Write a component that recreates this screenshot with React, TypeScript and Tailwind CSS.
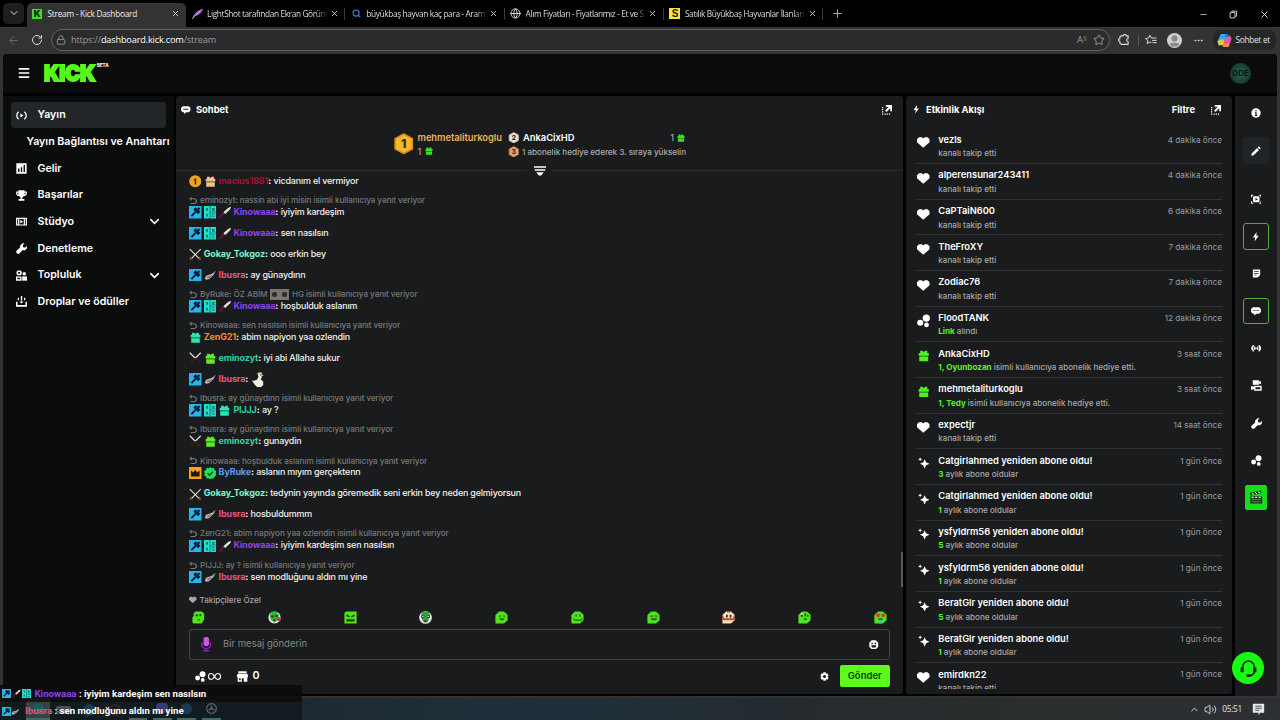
import type { ReactNode } from 'react';
import {
  ChevronDown,
  ChevronUp,
  Globe,
  Lock,
  Menu,
  Minus,
  MoreHorizontal,
  Plus,
  RotateCw,
  Search,
  Star,
  Volume2,
  X,
  ArrowLeft,
} from 'lucide-react';

interface IconProps {
  size?: number;
  className?: string;
}

function Glyph({ size = 12, className = '', children }: IconProps & { children: ReactNode }) {
  return (
    <svg
      width={size}
      height={size}
      viewBox="0 0 16 16"
      fill="currentColor"
      className={`flex-none ${className}`}
    >
      {children}
    </svg>
  );
}

/* ---------- Icons ---------- */

const HeartIcon = (p: IconProps) => (
  <Glyph {...p}>
    <path d="M2.5 1.5h3.7L8 3.2l1.8-1.7h3.7L16 4v4l-8 7-8-7V4z" />
  </Glyph>
);

const GiftIcon = (p: IconProps) => (
  <Glyph {...p}>
    <path d="M3 1h3.4L8 3l1.6-2H13v3h2v4H1V4h2zM1.8 9h12.4v6.500H1.800z" />
    <path d="M1.800 8h12.400v1H1.800z" opacity=".45" />
  </Glyph>
);

const LinksIcon = (p: IconProps) => (
  <Glyph {...p}>
    <circle cx="11" cy="4.8" r="4.3" />
    <circle cx="3.8" cy="10.3" r="3.6" />
    <circle cx="11.3" cy="13" r="2.8" />
  </Glyph>
);

const SparkleIcon = (p: IconProps) => (
  <Glyph {...p}>
    <path d="M9.2 3l2 4.4L16 9.5l-4.8 2-2 4.5-2-4.5-4.4-2 4.4-2.1zM3 .5l.8 1.9 2 .9-2 .8L3 6l-.9-1.9-1.9-.8 1.9-.9z" />
  </Glyph>
);

const BoltIcon = (p: IconProps) => (
  <Glyph {...p}>
    <path d="M9.5 0L3 9.3h4L6 16l7-9.6H9z" />
  </Glyph>
);

const ChatIcon = ({ dots = false, ...p }: IconProps & { dots?: boolean }) => (
  <Glyph {...p}>
    <path d="M3 2h10l2.8 2.7v4.8L13 12.2H8.8L5.2 15v-2.8H3L.2 9.5V4.7z" />
    {dots ? (
      <path d="M4 6.3h1.7V8H4zM7.2 6.3h1.7V8H7.2zM10.4 6.3h1.7V8h-1.7z" fill="#191b1c" />
    ) : (
      <path d="M3.8 6.4h8.4v1.5H3.8z" fill="#191b1c" />
    )}
  </Glyph>
);

const PopoutIcon = (p: IconProps) => (
  <Glyph {...p}>
    <path d="M6 0h10v10h-2.800V5L7.200 11 5 8.800l5.800-5.900H6z" />
    <path d="M0 3h2v2H0zM0 6.500h2v2H0zM0 10h2v2H0zM0 13.500h2v2H0zM4 13.500h2v2H4zM7.500 13.500h2v2h-2zM11 13.500h2v2h-2z" />
  </Glyph>
);

const BroadcastIcon = (p: IconProps) => (
  <Glyph {...p}>
    <path
      d="M3.800 2.500C.3 5.300.3 10.700 3.800 13.500M12.200 2.500c3.500 2.800 3.500 8.200 0 11"
      fill="none"
      stroke="currentColor"
      strokeWidth="1.900"
    />
    <path d="M6.300 5.200L10.800 8l-4.500 2.800z" />
  </Glyph>
);

const ChartIcon = (p: IconProps) => (
  <Glyph {...p}>
    <path d="M.5.5h15v15H.5z" />
    <path d="M3 8h2v5H3zM7 6h2v7H7zM11 3h2v10h-2z" fill="#0b0c0c" />
  </Glyph>
);

const TrophyIcon = (p: IconProps) => (
  <Glyph {...p}>
    <path
      fillRule="evenodd"
      d="M3.500.5h9v1.700h3.300v4l-2.300 2.600h-2L9.300 10.800v2.200h2.900v2.500H3.800V13h2.900v-2.200L4.500 8.800h-2L.2 6.200v-4h3.300zM2 4v1.800l1.500 1V4zm10.500 0v2.800l1.500-1V4z"
    />
  </Glyph>
);

const StudioIcon = (p: IconProps) => (
  <Glyph {...p}>
    <path fillRule="evenodd" d="M0 2.500h16v11.300H0zM1.800 4.200v8H3v-8zm11.200 0v8h1.200v-8zM4.800 4.200v8h6.400v-8z" />
    <path d="M6.200 5.500l4 2.700-4 2.700z" />
  </Glyph>
);

const WrenchIcon = (p: IconProps) => (
  <Glyph {...p}>
    <path d="M9.500.5h3L10.200 3v2.600l1 .9h2.300L15.800 4v4l-2.600 2.600H9.500L4.500 15.500H2l-1.600-1.700v-2.200L6 6.600V3.800z" />
  </Glyph>
);

const CommunityIcon = (p: IconProps) => (
  <Glyph {...p}>
    <path fillRule="evenodd" d="M2.500.8h4l1.800 1.800v3.200L6.500 7.600h-4L.8 5.800V2.600zm.9 2L2.800 4.200l.6 1.300h2.200l.6-1.300-.6-1.400z" />
    <circle cx="12" cy="5.500" r="2.600" />
    <path fillRule="evenodd" d="M0 9.300h8v6.200H0zm2 2v2.200h4v-2.200z" />
    <path d="M9 9.300h7v6.200H9z" />
  </Glyph>
);

const DropsIcon = (p: IconProps) => (
  <Glyph {...p}>
    <path d="M7 0h2v6H7zM2.500 2.500h1.800V6H2.500zM11.700 2.500h1.800V6h-1.800zM0 8.500h2.200V13h11.600V8.500H16v7H0zM7 7h2v1.500h2L8 11 5 8.500h2z" />
  </Glyph>
);

const InfoIcon = (p: IconProps) => (
  <Glyph {...p}>
    <circle cx="8" cy="8" r="7.500" />
    <path d="M7 3.500h2v2H7zM6.200 6.800H9v4.500h1v1.500H6.200v-1.500h.9v-3h-.9z" fill="#191b1c" />
  </Glyph>
);

const PencilIcon = (p: IconProps) => (
  <Glyph {...p}>
    <path d="M12.500.5l3 3-1.800 1.800-3-3zM9.800 3.300l3 3-8.600 8.600-3.700.6.600-3.600z" />
  </Glyph>
);

const ScenesIcon = (p: IconProps) => (
  <Glyph {...p}>
    <path fillRule="evenodd" d="M4.300 3.500h7.400l1.300 1.300v6.400l-1.300 1.300H4.300L3 11.200V4.800zm2.500 2.300v4.400L10.300 8z" />
    <path d="M0 1h3.500v1.500h-2V5H0zM16 1h-3.500v1.500h2V5H16zM0 15h3.500v-1.500h-2V11H0zM16 15h-3.500v-1.500h2V11H16z" />
  </Glyph>
);

const NoteIcon = (p: IconProps) => (
  <Glyph {...p}>
    <path d="M1.500 1h13v9.500l-4.500 4.700H1.500z" />
    <path d="M4 4h8v1.300H4zM4 7h8v1.300H4zM4 10h4v1.300H4z" fill="#191b1c" />
  </Glyph>
);

const SignalIcon = (p: IconProps) => (
  <Glyph {...p}>
    <path d="M3 3h1.700L3.300 8l1.400 5H3L.5 9.500v-3zM13 3h-1.700L12.700 8l-1.400 5H13l2.500-3.500v-3zM4.800 5.500h1.800v1.700h2.800V5.500h1.800v5H9.400V8.800H6.600v1.700H4.800z" />
  </Glyph>
);

const MultiCamIcon = (p: IconProps) => (
  <Glyph {...p}>
    <path d="M2.500 .5h9v2l3-1.200v4.900l-3-1.200v2h-9z" />
    <path fillRule="evenodd" d="M0 9h2.500L4.500 10V8.500h11V15.500h-11v-2.500L0 14.500zm6.500 1.500v3h7v-3z" />
  </Glyph>
);

const ShopIcon = (p: IconProps) => (
  <Glyph {...p}>
    <path fillRule="evenodd" d="M2 .5h12v2.300H2zM1.500 3.700h13L16 6v3h-1v6.500H9.800v-5H7v5H1V9H0V6zM3 10.500v3h2.300v-3z" />
  </Glyph>
);

const SmileIcon = (p: IconProps) => (
  <Glyph {...p}>
    <path d="M4.500.5h7l4 4v7l-4 4h-7l-4-4v-7z" />
    <path d="M4 4.500h2.500V7H4zM9.500 4.500H12V7H9.500zM3.500 9h9l-1.500 3.500H5z" fill="#191b1c" />
  </Glyph>
);

const GearIcon = (p: IconProps) => (
  <Glyph {...p}>
    <path fillRule="evenodd" d="M6 .5h4l.5 2.500 2.500-.8L15.300 6l-2 2 2 2-2.300 3.800-2.500-.8-.5 2.500H6L5.500 13l-2.500.8L.7 10l2-2-2-2L3 2.200l2.500.8zM8 5.300a2.700 2.700 0 100 5.400 2.700 2.700 0 000-5.400z" />
  </Glyph>
);

const ReplyIcon = (p: IconProps) => (
  <Glyph {...p}>
    <path d="M5 1v3.300h6l4 3.400v4L11.500 15H3v-2h7.500l2.300-2V8.500l-2.600-2.200H5v3.200L.5 5.300z" />
  </Glyph>
);

const ExtensionIcon = (p: IconProps) => (
  <Glyph {...p}>
    <path
      d="M4 2.500h3a2 2 0 014 0h2.500V6a2 2 0 000 4v3.800H4.500L2.500 12V9.800a1.800 1.800 0 010-3.600V4z"
      fill="none"
      stroke="currentColor"
      strokeWidth="1.500"
      strokeLinejoin="round"
    />
  </Glyph>
);

/* ---------- Chat badges ---------- */

type Badge = 'mod' | 'og' | 'knife' | 'sword' | 'swordRed' | 'blade' | 'gold' | 'host' | 'verified' | 'giftTan' | 'giftTeal' | 'giftGreen';

function BadgeIcon({ kind }: { kind: Badge }) {
  switch (kind) {
    case 'mod':
      return (
        <Glyph size={12.500}>
          <path d="M0 0h16v16H0z" fill="#26b5ee" />
          <path d="M5.500 4.500L8.500 1.500l6 6-3 3z" fill="#0b1c26" />
          <path d="M11.500 2.500l2 2M8.500 7.500l-5.500 5.500" stroke="#0b1c26" strokeWidth="2.600" />
        </Glyph>
      );
    case 'og':
      return (
        <Glyph size={12.500}>
          <path d="M0 0h16v16H0z" fill="#1fe0cb" />
          <path d="M3 2.500h2v3.500H3zM10.500 2.500H14v1h-2v1.200h2V6h-3.500zM3 10h2v3.500H3zM9.500 9.500h4.500v.900H9.500zM9.500 12.500h4.500v.900H9.500z" fill="#0b6664" />
          <path d="M7.300 0h.8v16h-.8zM8 7.500h8v.6H8z" fill="#134d50" />
        </Glyph>
      );
    case 'knife':
      return (
        <Glyph size={12.500}>
          <path d="M0 16l.5-3 4.500-5 2 1.800L3 15z" fill="#64103f" />
          <path d="M5.500 8L12 2.200 15.500.8 14.300 4 8 10.200z" fill="#e4dfdc" />
        </Glyph>
      );
    case 'sword':
      return (
        <Glyph size={12.500}>
          <path d="M1 1.500l12 12M15 1.500l-12 12" stroke="#ddd9cf" strokeWidth="1.500" />
          <path d="M1.500 11.500l3 3M14.500 11.500l-3 3M3.500 12.500L1 15M12.500 12.500L15 15" stroke="#8b6720" strokeWidth="1.500" />
        </Glyph>
      );
    case 'swordRed':
      return (
        <Glyph size={12.500}>
          <path d="M1 1l7 7 7-7" fill="none" stroke="#d8d8d8" strokeWidth="1.700" />
          <path d="M8 8l-6 6M8 8l6 6M1.500 11L5 14.500M14.500 11L11 14.500" stroke="#4a1822" strokeWidth="1.400" />
        </Glyph>
      );
    case 'blade':
      return (
        <Glyph size={12.500}>
          <path d="M1 12.500L2.500 8.500 10 6l5-3.500-2.500 5-6 5.500-4 .8z" fill="#bab3b3" />
          <path d="M3 10l8-2.500-4.500 5z" fill="#8c7b7f" />
          <path d="M10 6l5-3.500-2 3z" fill="#777" />
        </Glyph>
      );
    case 'gold':
      return (
        <Glyph size={12.500}>
          <circle cx="8" cy="8" r="7.700" fill="#eda51d" />
          <path d="M6 5.500L8 4h1.300v8H7.300V6.500L6 7.200z" fill="#54320b" />
        </Glyph>
      );
    case 'host':
      return (
        <Glyph size={12.500}>
          <path d="M0 0h16v16H0z" fill="#f5a51c" />
          <path d="M2.500 4.500l3 2.500L8 3.500 10.500 7l3-2.500V12h-11z" fill="#231a09" />
        </Glyph>
      );
    case 'verified':
      return (
        <Glyph size={12.500}>
          <path d="M8 0l2 1.500 2.700-.3.700 2.600 2.400 1.300L15 8l.8 2.800-2.400 1.300-.7 2.700-2.700-.4L8 16l-2-1.600-2.700.4-.7-2.700-2.400-1.300L1 8 .2 5.100l2.400-1.300.7-2.600 2.700.3z" fill="#1fe35c" />
          <path d="M4.500 8l2.500 2.500L11.500 6" fill="none" stroke="#0c4a20" strokeWidth="2" />
        </Glyph>
      );
    case 'giftTan':
      return <GiftIcon size={11} className="text-[#efc283]" />;
    case 'giftTeal':
      return <GiftIcon size={11} className="text-[#2be6b4]" />;
    case 'giftGreen':
      return <GiftIcon size={11} className="text-[#5fea2a]" />;
  }
}

/* ---------- Data ---------- */

interface Message {
  user: string;
  color: string;
  badges: Badge[];
  text?: string;
  reply?: string;
  kind?: 'duck' | 'emoteReply';
}

const PURPLE = 'text-[#8b42e8]';
const MINT = 'text-[#7ff5c9]';
const PINK = 'text-[#e2557f]';
const TEAL = 'text-[#2fd3a5]';

const MESSAGES: Message[] = [
  { user: 'macius1881', color: 'text-[#ae0d35]', badges: ['gold', 'giftTan'], text: 'vicdanım el vermiyor' },
  { user: 'Kinowaaa', color: PURPLE, badges: ['mod', 'og', 'knife'], text: 'iyiyim kardeşim', reply: 'eminozyt: nassin abi iyi misin' },
  { user: 'Kinowaaa', color: PURPLE, badges: ['mod', 'og', 'knife'], text: 'sen nasılsın' },
  { user: 'Gokay_Tokgoz', color: MINT, badges: ['sword'], text: 'ooo erkin bey' },
  { user: 'Ibusra', color: PINK, badges: ['mod', 'blade'], text: 'ay günaydınn' },
  { user: 'Kinowaaa', color: PURPLE, badges: ['mod', 'og', 'knife'], text: 'hoşbulduk aslanım', reply: 'ByRuke: ÖZ ABİM', kind: 'emoteReply' },
  { user: 'ZenG21', color: 'text-[#f58a23]', badges: ['giftTeal'], text: 'abim napiyon yaa ozlendin', reply: 'Kinowaaa: sen nasılsın' },
  { user: 'eminozyt', color: TEAL, badges: ['swordRed', 'giftGreen'], text: 'iyi abi Allaha sukur' },
  { user: 'Ibusra', color: PINK, badges: ['mod', 'blade'], kind: 'duck' },
  { user: 'PIJJJ', color: TEAL, badges: ['mod', 'og', 'giftTeal'], text: 'ay ?', reply: 'Ibusra: ay günaydınn' },
  { user: 'eminozyt', color: TEAL, badges: ['swordRed', 'giftGreen'], text: 'gunaydin', reply: 'Ibusra: ay günaydınn' },
  { user: 'ByRuke', color: 'text-[#5f9df0]', badges: ['host', 'verified'], text: 'aslanın mıyım gerçektenn', reply: 'Kinowaaa: hoşbulduk aslanım' },
  { user: 'Gokay_Tokgoz', color: MINT, badges: ['sword'], text: 'tedynin yayında göremedik seni erkin bey neden gelmiyorsun' },
  { user: 'Ibusra', color: PINK, badges: ['mod', 'blade'], text: 'hosbuldummm' },
  { user: 'Kinowaaa', color: PURPLE, badges: ['mod', 'og', 'knife'], text: 'iyiyim kardeşim sen nasılsın', reply: 'ZenG21: abim napiyon yaa ozlendin' },
  { user: 'Ibusra', color: PINK, badges: ['mod', 'blade'], text: 'sen modluğunu aldın mı yine', reply: 'PIJJJ: ay ?' },
];

interface Activity {
  icon: 'heart' | 'links' | 'gift' | 'sparkle';
  title: string;
  accent?: string;
  text: string;
  time: string;
}

const ACTIVITIES: Activity[] = [
  { icon: 'heart', title: 'vezls', text: 'kanalı takip etti', time: '4 dakika önce' },
  { icon: 'heart', title: 'alperensunar243411', text: 'kanalı takip etti', time: '4 dakika önce' },
  { icon: 'heart', title: 'CaPTaiN600', text: 'kanalı takip etti', time: '6 dakika önce' },
  { icon: 'heart', title: 'TheFroXY', text: 'kanalı takip etti', time: '7 dakika önce' },
  { icon: 'heart', title: 'Zodiac76', text: 'kanalı takip etti', time: '7 dakika önce' },
  { icon: 'links', title: 'FloodTANK', accent: 'Link', text: 'alındı', time: '12 dakika önce' },
  { icon: 'gift', title: 'AnkaCixHD', accent: '1, Oyunbozan', text: 'isimli kullanıcıya abonelik hediye etti.', time: '3 saat önce' },
  { icon: 'gift', title: 'mehmetaliturkoglu', accent: '1, Tedy', text: 'isimli kullanıcıya abonelik hediye etti.', time: '3 saat önce' },
  { icon: 'heart', title: 'expectjr', text: 'kanalı takip etti', time: '14 saat önce' },
  { icon: 'sparkle', title: 'Catgirlahmed yeniden abone oldu!', accent: '3', text: 'aylık abone oldular', time: '1 gün önce' },
  { icon: 'sparkle', title: 'Catgirlahmed yeniden abone oldu!', accent: '1', text: 'aylık abone oldular', time: '1 gün önce' },
  { icon: 'sparkle', title: 'ysfyldrm56 yeniden abone oldu!', accent: '5', text: 'aylık abone oldular', time: '1 gün önce' },
  { icon: 'sparkle', title: 'ysfyldrm56 yeniden abone oldu!', accent: '1', text: 'aylık abone oldular', time: '1 gün önce' },
  { icon: 'sparkle', title: 'BeratGlr yeniden abone oldu!', accent: '5', text: 'aylık abone oldular', time: '1 gün önce' },
  { icon: 'sparkle', title: 'BeratGlr yeniden abone oldu!', accent: '1', text: 'aylık abone oldular', time: '1 gün önce' },
  { icon: 'heart', title: 'emirdkn22', text: 'kanalı takip etti', time: '1 gün önce' },
];

const NAV = [
  { label: 'Gelir', icon: <ChartIcon size={11} /> },
  { label: 'Başarılar', icon: <TrophyIcon size={11} /> },
  { label: 'Stüdyo', icon: <StudioIcon size={11} />, expandable: true },
  { label: 'Denetleme', icon: <WrenchIcon size={11} /> },
  { label: 'Topluluk', icon: <CommunityIcon size={11} />, expandable: true },
  { label: 'Droplar ve ödüller', icon: <DropsIcon size={11} /> },
];

/* ---------- Browser chrome ---------- */

function KickMark() {
  return (
    <span className="grid h-[10px] w-[10px] flex-none place-items-center bg-[#35e61d] font-[Inter] text-[9px] font-black leading-none text-[#08230a]">
      K
    </span>
  );
}

const TABS = [
  {
    title: 'LightShot tarafından Ekran Görünt',
    icon: (
      <Glyph size={11}>
        <path d="M0 16C3 8 8 3 16 1c-1 5-5 9-12 11z" fill="#a35fd0" />
        <path d="M0 16L12 4" stroke="#e5c3f5" strokeWidth="1" />
      </Glyph>
    ),
  },
  { title: 'büyükbaş hayvan kaç para - Aram', icon: <Search size={9} strokeWidth={3} className="mx-px flex-none text-[#2f7fd6]" /> },
  { title: 'Alım Fiyatları - Fiyatlarımız - Et ve S', icon: <Globe size={11} className="flex-none text-[#e0e0e0]" /> },
  {
    title: 'Satılık Büyükbaş Hayvanlar İlanları',
    icon: (
      <span className="grid h-[11px] w-[11px] flex-none place-items-center bg-[#f6e92e] font-['Liberation_Sans'] text-[10px] font-bold leading-none text-[#222]">
        S
      </span>
    ),
  },
];

function TabBar() {
  return (
    <div className="flex h-[26.500px] flex-none items-end bg-black font-['Open_Sans','Noto_Sans',sans-serif] text-[8.300px] font-medium tracking-[-0.250px] text-[#dedede]">
      <div className="mb-[3px] ml-[3px] grid h-[21px] w-[21px] flex-none place-items-center rounded-[5px] bg-[#1e1e1e]">
        <ChevronDown size={12} strokeWidth={2} />
      </div>
      <div className="ml-[3px] flex h-[23.500px] w-[159px] flex-none items-center rounded-t-[5px] bg-[#333] pl-[5px] pr-[6px] pb-[2px]">
        <KickMark />
        <span className="ml-[5.500px] flex-1 whitespace-nowrap text-[#eee]">Stream - Kick Dashboard</span>
        <X size={9} strokeWidth={2.200} />
      </div>
      {TABS.map((tab) => (
        <div key={tab.title} className="flex h-[23.500px] w-[159.300px] flex-none items-center pb-[2px] pl-[5.500px]">
          {tab.icon}
          <span className="ml-[4.500px] w-[122px] whitespace-nowrap tracking-[-0.370px] [mask-image:linear-gradient(to_right,black_90%,transparent)]">
            {tab.title}
          </span>
          <X size={9} strokeWidth={2.200} className="ml-[1.500px] flex-none" />
          <span className="ml-[5.500px] h-3 w-px bg-[#3b3b3b]" />
        </div>
      ))}
      <Plus size={13} strokeWidth={1.600} className="mb-[6.500px] ml-[8px] flex-none text-[#b8b8b8]" />
      <div className="mb-[7px] ml-auto mr-[10px] flex items-center gap-[21px]">
        <Minus size={9} />
        <Glyph size={9} className="text-[#cfcfcf]">
          <path fill="none" stroke="currentColor" strokeWidth="1.700" d="M2 4.500h8.500V14H2zM5 4V2h8.500v9H11" />
        </Glyph>
        <X size={11} strokeWidth={2} />
      </div>
    </div>
  );
}

function Toolbar() {
  return (
    <div className="flex h-[27px] flex-none items-center bg-[#333] font-['Open_Sans','Noto_Sans',sans-serif] text-[#dcdcdc]">
      <ArrowLeft size={13} strokeWidth={1.800} className="ml-[7px] flex-none text-[#6c6c6c]" />
      <RotateCw size={12} strokeWidth={2} className="ml-[11px] flex-none" />
      <div className="ml-[7.500px] flex h-[22px] w-[1059.500px] flex-none items-center rounded-full border border-[#606060] bg-[#2b2b2b] pl-[4.500px] pr-[4px]">
        <Lock size={10} className="flex-none text-[#9a9a9a]" />
        <span className="ml-[5px] flex-1 text-[9.200px] tracking-[-0.180px] text-[#9c9c9c]">
          https://<span className="text-white">dashboard.kick.com</span>/stream
        </span>
        <span className="text-[9.500px] text-[#9a9a9a]">A<sup className="text-[6px]">))</sup></span>
        <Star size={12} strokeWidth={1.800} className="ml-[6.500px] flex-none text-[#a8a8a8]" />
      </div>
      <ExtensionIcon size={12} className="ml-[8px]" />
      <span className="ml-[7.500px] h-[11px] w-px bg-[#565656]" />
      <Glyph size={12} className="ml-[6.500px]">
        <path fill="none" stroke="currentColor" strokeWidth="1.300" d="M8.500 11.500L6.500 10.600 3 13l.7-4.200L.8 6l4-.6L6.600 1.600l1.900 3.800h6.800M9.500 8.500h6M10 11.500h5.500" />
      </Glyph>
      <span className="ml-[9.500px] grid h-[15px] w-[15px] flex-none place-items-center overflow-hidden rounded-full bg-[#cfcfcf] text-[#8b8b8b]">
        <Glyph size={15}>
          <circle cx="8" cy="5.800" r="3.300" />
          <path d="M2.500 12c1-2.200 10-2.200 11 0L11 14.500H5z" />
        </Glyph>
      </span>
      <MoreHorizontal size={11} className="ml-[11.500px] flex-none" />
      <div className="ml-[9px] flex h-[20px] w-[63px] flex-none items-center gap-[4px] rounded-[8px] bg-[#262626] pl-[3.500px]">
        <Glyph size={15}>
          <path d="M4 1h6L7.500 13H1.500L.5 9z" fill="#2aa7e8" />
          <path d="M.5 9L3 7h5l-1 6H2z" fill="#e8c53b" />
          <path d="M9 3h5l1.500 3-3 9h-6z" fill="#e558a4" />
          <path d="M9.500 1H12l1 3H9z" fill="#2f5fd8" />
          <path d="M8 11h5.500l-1.500 4H6z" fill="#f18a55" />
        </Glyph>
        <span className="whitespace-nowrap text-[8.300px] font-medium tracking-[-0.300px] text-[#e4e4e4]">Sohbet et</span>
      </div>
    </div>
  );
}

/* ---------- Dashboard ---------- */

function Sidebar() {
  return (
    <aside className="w-[171px] flex-none bg-[#0b0c0c] pl-[8px] pt-[6.300px] text-[10.670px] font-semibold text-white">
      <div className="flex h-[26.700px] w-[154.500px] items-center rounded-[3px] bg-[#232628] pl-[5px]">
        <BroadcastIcon size={11} />
        <span className="ml-[10.500px]">Yayın</span>
      </div>
      <div className="flex h-[26.700px] items-center whitespace-nowrap pl-[15.500px]">Yayın Bağlantısı ve Anahtarı</div>
      {NAV.map((item) => (
        <div key={item.label} className="flex h-[26.700px] w-[154.500px] items-center pl-[5px] pr-[4px]">
          {item.icon}
          <span className="ml-[10.500px] flex-1">{item.label}</span>
          {item.expandable && <ChevronDown size={15} strokeWidth={2.500} />}
        </div>
      ))}
    </aside>
  );
}

function Duck() {
  return (
    <Glyph size={15}>
      <path d="M7 1.500L9 .5h2.500v4.500L10.500 8l2.500 2v4L10.500 16H6.500L4 13.500 1 9l2.500.3 3-1.300L8 5z" fill="#efeee2" />
      <path d="M11.500 3h3l-3 1.800zM5 2.500L8.500.2 10.500 1z" fill="#b29845" />
      <path d="M9.500 2.500h1v1h-1z" fill="#222" />
    </Glyph>
  );
}

function MessageRow({ message }: { message: Message }) {
  const line = (
    <div className="flex h-[12.400px] items-center whitespace-nowrap">
      <div className="flex items-center gap-[2.300px]">
        {message.badges.map((badge) => (
          <span key={badge} className="grid w-[12.500px] flex-none place-items-center">
            <BadgeIcon kind={badge} />
          </span>
        ))}
      </div>
      <span className={`ml-[2.300px] font-bold tracking-[-0.130px] ${message.color}`}>{message.user}</span>
      <span className="mr-[2.300px] font-bold text-white">:</span>
      {message.kind === 'duck' ? (
        <Duck />
      ) : (
        <span className="font-medium tracking-[-0.190px] text-[#f2f2f2]">{message.text}</span>
      )}
    </div>
  );

  if (!message.reply) return <div className="flex h-[20.800px] items-center">{line}</div>;

  return (
    <div className="h-[31.250px] pt-[2.500px]">
      <div className="flex h-[12px] items-center whitespace-nowrap text-[8.200px] font-medium tracking-[-0.090px] text-[#75787a]">
        <ReplyIcon size={8.500} className="mr-[2.500px]" />
        {message.reply}
        {message.kind === 'emoteReply' && (
          <>
            <span className="ml-[3px] mr-[3px] flex h-[11px] w-[18.500px] items-center justify-center gap-[5px] bg-[#767570]">
              <span className="h-[5px] w-[5px] rounded-full bg-[#2c2c2c]" />
              <span className="h-[5px] w-[5px] rounded-full bg-[#2c2c2c]" />
            </span>
            HG
          </>
        )}
        <span className="whitespace-pre"> isimli kullanıcıya yanıt veriyor</span>
      </div>
      {line}
    </div>
  );
}

const Hexagon = ({ size, color, edge, label }: { size: number; color: string; edge: string; label: string }) => (
  <svg width={size} height={size} viewBox="0 0 20 20" className="flex-none">
    <path d="M10 1l8 4.200v9.600L10 19l-8-4.200V5.200z" fill={color} stroke={edge} strokeWidth="1.500" strokeLinejoin="round" />
    <text x="10" y="14" textAnchor="middle" fontFamily="Inter" fontWeight="800" fontSize="11.500" fill="#3d2a10">
      {label}
    </text>
  </svg>
);

function Leaderboard() {
  return (
    <div className="flex h-[43px] items-start pl-[217px] pt-[3px] text-[9.330px]">
      <div className="flex w-[115px] flex-none items-start">
        <span className="pt-[2.500px]">
          <Hexagon size={21.500} color="#f6b92d" edge="#d98f1c" label="1" />
        </span>
        <div className="ml-[3px]">
          <div className="font-semibold leading-[14px] tracking-[-0.020px] text-[#efb458]">mehmetaliturkoglu</div>
          <div className="flex items-center gap-[4px] leading-[13px] text-[#b5b7b9]">
            1 <GiftIcon size={8} className="text-[#35e61d]" />
          </div>
        </div>
      </div>
      <div className="w-[177px]">
        <div className="flex h-[14px] items-center">
          <Hexagon size={11.500} color="#e5e5e5" edge="#bdbdbd" label="2" />
          <span className="ml-[3.500px] flex-1 font-semibold text-white">AnkaCixHD</span>
          <span className="mr-[3px] text-[#b5b7b9]">1</span>
          <GiftIcon size={8} className="text-[#35e61d]" />
        </div>
        <div className="flex h-[15px] items-center text-[8.200px] font-medium tracking-[-0.050px] text-[#a9abad]">
          <Hexagon size={11.500} color="#eaa06a" edge="#c97d4b" label="3" />
          <span className="ml-[2.500px] whitespace-nowrap">1 abonelik hediye ederek 3. sıraya yükselin</span>
        </div>
      </div>
    </div>
  );
}

/* Quick emotes: a green blob with a small face */
const BLOB = 'M5 .5h6L15.500 4.500v7l-4.500 4H.5V5z';

const EMOTES: ReactNode[] = [
  <><path d="M4 .5h8L15 3.500v7l-3 5H2l-1.500-2V8L2 6V3z" fill="#4fe41d" /><path d="M4.500 4h2.500v2.500H4.500zM9 4h2.500v2.500H9zM7 10h3v1.500H7z" fill="#173c0b" /></>,
  <><circle cx="8" cy="8" r="7.500" fill="#e9efe6" /><path d="M4 1h6l3.500 4L12 11l-4 3.500-4-3L2 6z" fill="#33b72a" /><path d="M4 5.500h3v2.500H4zM9 5h3v2.500H9zM6.500 10h3v2h-3z" fill="#522345" /><circle cx="13.500" cy="10" r="2.500" fill="#c42f7c" /></>,
  <><path d="M.5 2L3 .5h12.500v15H.5z" fill="#4fe41d" /><path d="M3 4l4 2v2L3 6.500zM13 4L9 6v2l4-1.500zM3 10h10v3H3z" fill="#173c0b" /></>,
  <><circle cx="8" cy="8" r="7.800" fill="#e9efe6" /><path d="M4 1h8l1.500 4-1.500 6-2 3H6l-2-3L2.500 5z" fill="#2da837" /><path d="M2.500 5.500h4v3h-4zM9.500 5.500h4v3h-4zM6.500 11h3v2.500h-3z" fill="#52336b" /><path d="M4 6h1.500v1.300H4zM10.500 6H12v1.300h-1.500z" fill="#fff" /></>,
  <><path d={BLOB} fill="#4fe41d" /><path d="M5 5.500h2.500V7H5zM10 5.500h2.500V7H10zM5 9h7l-2 2.500H7z" fill="#246615" /></>,
  <><path d={BLOB} fill="#4fe41d" /><path d="M5.500 4h1.500v3H5.500zM10 4h1.500v3H10zM3 9h1.300v1.500h8.400V9H14v1.500L12.500 12h-8L3 10.500z" fill="#246615" /></>,
  <><path d={BLOB} fill="#4fe41d" /><path d="M4 5.500h3.500V7H4zM9.500 5.500H13V7H9.500zM4 9h9l-2 2.500H6z" fill="#246615" /></>,
  <><path d={BLOB} fill="#ece6bd" /><path d="M5 4.500h2V8H5zM9.500 4.500h2V8h-2z" fill="#222" /><path d="M0 5.500h1.500l1 3.500h11l1-3.500H16V9l-2 2.500H2L0 9zM6 0h4v1.800H6z" fill="#c9432c" /></>,
  <><path d={BLOB} fill="#4fe41d" /><path d="M3.500 3.500l2.500 1v2.500H3.500zM8 3h2v3.500H8zM11 5h2v2h-2zM7 9h4v1.800H7z" fill="#24591a" /><path d="M3 3h3v1.500H3z" fill="#c9f2bd" /></>,
  <><path d={BLOB} fill="#4fe41d" /><path d="M2.500 3.500h4.500v3l-2 1.500-2.500-2zM9 3.500h4.500v3l-2 1.500L9 6z" fill="#cf3b38" /><path d="M5.500 9h5v2h-5z" fill="#24591a" /><path d="M6.500 11h2.500v4.500H6.500z" fill="#45b7e0" /></>,
];

function ChatPanel() {
  return (
    <section className="relative flex w-[727px] flex-none flex-col rounded-[3px] bg-[#191b1c] text-white">
      <header className="flex h-[28px] flex-none items-center pl-[5px] pr-[11px] text-[9.330px] font-bold">
        <ChatIcon size={9.500} />
        <span className="ml-[5.500px] flex-1">Sohbet</span>
        <PopoutIcon size={10} />
      </header>
      <div className="h-[4px] flex-none" />
      <Leaderboard />
      <div className="flex h-0 flex-none items-center">
        <span className="h-px w-[351px] bg-[#2a2d2f]" />
        <span className="flex w-[25px] justify-center">
          <Glyph size={12}>
            <path d="M0 1.500h16v2H0zM1 5.500h14v2H1zM3 9.500h10L9.500 14h-3z" />
          </Glyph>
        </span>
        <span className="h-px flex-1 bg-[#2a2d2f]" />
      </div>

      <div className="flex-none pl-[13px] pt-[0.700px] text-[8.950px] leading-none">
        {MESSAGES.map((message, i) => (
          <MessageRow key={i} message={message} />
        ))}
      </div>

      <div className="flex min-h-0 flex-1 flex-col pl-[13px] pr-[13.500px]">
        <div className="mt-[6px] flex h-[12px] items-center gap-[3px] text-[8.100px] font-medium tracking-[-0.030px] text-[#a4a6a8]">
          <HeartIcon size={7.500} />
          Takipçilere Özel
        </div>
        <div className="mt-[5px] flex h-[13px] justify-between pl-[3px] pr-[2.500px]">
          {EMOTES.map((emote, i) => (
            <Glyph key={i} size={13}>
              {emote}
            </Glyph>
          ))}
        </div>
        <div className="mt-[5.500px] flex h-[30.500px] flex-none items-center rounded-[3px] border-[1.500px] border-[#414446] pl-[8.500px] pr-[10px]">
          <Glyph size={14.500} className="text-[#b43be0]">
            <path d="M6.500 0h3L11 1.500v7L9.500 10h-3L5 8.500v-7z" fill="#cc54ea" />
            <path d="M2.500 6H4v4l2 2h4l2-2V6h1.500v4.500L11 13H9v1.500h2.500V16h-7v-1.500H7V13H5l-2.500-2.500z" fill="#8d22bb" />
          </Glyph>
          <span className="ml-[10px] flex-1 text-[9.500px] text-[#85888b]">Bir mesaj gönderin</span>
          <SmileIcon size={9.500} />
        </div>
        <div className="mt-[5.500px] flex h-[22px] flex-none items-center pl-[5.500px] text-[10.670px] font-semibold">
          <LinksIcon size={11} />
          <Glyph size={13} className="ml-[2px]">
            <path
              d="M8 8C6.500 5 5.300 4.300 4 4.300a3.500 3.700 0 000 7.400C5.300 11.700 6.500 11 8 8s2.700-3.700 4-3.700a3.500 3.700 0 010 7.400C10.700 11.700 9.500 11 8 8z"
              fill="none"
              stroke="currentColor"
              strokeWidth="1.500"
            />
          </Glyph>
          <ShopIcon size={11} className="ml-[16px]" />
          <span className="ml-[5px] flex-1">0</span>
          <GearIcon size={9} />
          <button type="button" className="ml-[11.500px] h-[22px] w-[49.500px] rounded-[2px] bg-[#5dfb1b] text-[9.500px] font-semibold text-[#123c07]">
            Gönder
          </button>
        </div>
      </div>
      <div className="absolute right-0 top-[456px] h-[35px] w-[2.500px] bg-[#55585a]" />
    </section>
  );
}

const ACTIVITY_ICONS = {
  heart: <HeartIcon size={12.500} />,
  links: <LinksIcon size={13.500} />,
  gift: <GiftIcon size={11.500} className="text-[#4df21f]" />,
  sparkle: <SparkleIcon size={11.500} />,
};

function ActivityPanel() {
  return (
    <section className="ml-[3px] flex w-[326px] flex-none flex-col rounded-[3px] bg-[#191b1c] pb-[5px] text-white">
      <header className="flex h-[28px] flex-none items-center pl-[5.500px] pr-[11px] text-[9.330px] font-bold">
        <BoltIcon size={8.500} />
        <span className="ml-[6px] flex-1">Etkinlik Akışı</span>
        Filtre
        <PopoutIcon size={10} className="ml-[16px]" />
      </header>
      <div className="mt-[4.900px] min-h-0 flex-1 overflow-hidden pl-[10px] pr-[10px]">
        {ACTIVITIES.map((item, i) => (
          <div key={i} className="flex h-[35.670px] border-b border-[#303335]">
            <span className="flex w-[14.500px] flex-none justify-center pt-[7.800px]">{ACTIVITY_ICONS[item.icon]}</span>
            <div className="ml-[7.800px] min-w-0 flex-1 pt-[4.400px]">
              <div className="flex h-[14px] items-center justify-between">
                <span className="text-[9.300px] font-semibold">{item.title}</span>
                <span className="text-[8.200px] text-[#9b9ea1]">{item.time}</span>
              </div>
              <div className="flex h-[13px] items-center whitespace-nowrap text-[8.100px] font-medium text-[#a6a9ac]">
                {item.accent && <span className="mr-[2px] font-bold text-[#55f522]">{item.accent}</span>}
                {item.text}
              </div>
            </div>
          </div>
        ))}
      </div>
    </section>
  );
}

const RAIL: { icon: ReactNode; className?: string }[] = [
  { icon: <InfoIcon size={10} /> },
  { icon: <PencilIcon size={10} />, className: 'bg-[#212426] mb-[10.700px]' },
  { icon: <ScenesIcon size={10.500} /> },
  { icon: <BoltIcon size={9.500} />, className: 'border border-[#4fae35]' },
  { icon: <NoteIcon size={9} /> },
  { icon: <ChatIcon dots size={10} />, className: 'border border-[#4fae35]' },
  { icon: <SignalIcon size={10.500} /> },
  { icon: <MultiCamIcon size={11} /> },
  { icon: <WrenchIcon size={11} /> },
  { icon: <LinksIcon size={11} /> },
];

function ToolRail() {
  return (
    <aside className="ml-[3px] flex flex-1 flex-col items-center gap-[10.700px] bg-[#191b1c] pt-[4.600px] text-white">
      {RAIL.map((item, i) => (
        <span key={i} className={`grid h-[26.700px] w-[26.700px] flex-none place-items-center rounded-[3px] ${item.className ?? ''}`}>
          {item.icon}
        </span>
      ))}
      <span className="grid h-[25.500px] w-[22.500px] flex-none place-items-center rounded-[2px] bg-[#17dd1e]">
        <Glyph size={14} className="text-[#0b2a0c]">
          <path d="M1 3.500L13.500.5l.8 3L2 6.500zM1.500 7H15v8.500H1.500z" />
          <path d="M3.500 3.600l2 1.800M7 2.700l2 1.800M10.500 1.800l2 1.800M3 8.500h2.500M7 8.500h2.500M11 8.500h2.500" stroke="#e9e9e9" strokeWidth="1.300" />
          <path d="M3 11h10.500M3 13.500h10.500" stroke="#8e8e8e" strokeWidth="1" />
        </Glyph>
      </span>
    </aside>
  );
}

function Dashboard() {
  return (
    <div className="flex h-[642px] flex-none flex-col overflow-hidden rounded-[4px] bg-black font-[Inter,sans-serif]">
      <header className="flex h-[39.500px] flex-none items-center bg-[#0b0b0b] pl-[14px] pr-[26px] text-white">
        <Menu size={14} strokeWidth={2.800} />
        <span className="ml-[12.500px] w-[53px] origin-left scale-x-[0.940] text-[22px] font-black leading-none tracking-[-0.400px] text-[#55fb1b] [-webkit-text-stroke:1.800px_#55fb1b]">
          KICK
        </span>
        <span className="ml-[0.500px] flex-1 self-start pt-[10.500px] text-[4.400px] font-extrabold leading-none">BETA</span>
        <span className="grid h-[21px] w-[21px] place-items-center overflow-hidden rounded-full bg-[radial-gradient(circle,#28654f,#0b2c24)] text-[8px] font-bold text-[#0a1512]">
          ODE
        </span>
      </header>
      <div className="mt-[2.500px] flex min-h-0 flex-1">
        <Sidebar />
        <div className="ml-[2px] flex min-w-0 flex-1">
          <div className="flex flex-none pb-[1.500px]">
            <ChatPanel />
            <ActivityPanel />
          </div>
          <ToolRail />
        </div>
      </div>
    </div>
  );
}

/* ---------- Desktop ---------- */

function Taskbar() {
  return (
    <div className="flex h-[22px] flex-none items-center bg-[linear-gradient(90deg,#1b2c30_0%,#1d2a33_25%,#20303a_45%,#242a2e_62%,#2a2e2e_80%,#2c3034_100%)] font-['Open_Sans','Noto_Sans',sans-serif] text-[8.300px] tracking-[-0.300px] text-[#e5e5e5]">
      <div className="flex h-full items-end gap-[5.500px] pl-[26px]">
        <span className="grid h-full w-[24px] place-items-center border-b-2 border-[#8ff0e2] bg-[#7b8b8e]"><span className="h-[11px] w-[11px] rounded-full bg-[#2ac9c2]" /></span>
        <span className="mb-[6px] h-[8px] w-[15px] rounded-[2px] bg-[#a5adb0]" />
        <span className="mb-[4px] ml-[7px] h-[12px] w-[12px] rounded-full bg-[#2b80b3]" />
        <span className="mb-[4px] ml-[8px] h-[12px] w-[12px] rounded-full border-2 border-[#992d3a]" />
        <span className="ml-[3px] h-[2px] w-[18px] bg-[#8ff0e2]" />
        <span className="grid h-full w-[19px] place-items-center border-b-2 border-[#8ff0e2]"><span className="h-[10px] w-[12px] rounded-[4px] bg-[#7f7dff]" /></span>
        <span className="grid h-full w-[19px] place-items-center border-b-2 border-[#8ff0e2]"><span className="h-[11px] w-[11px] rounded-full bg-[#2f7ab0]" /></span>
        <span className="grid h-full w-[19px] place-items-center border-b-2 border-[#8ff0e2]">
          <Glyph size={11} className="text-[#dfdfdf]">
            <circle cx="8" cy="8" r="7" fill="none" stroke="currentColor" strokeWidth="1.800" />
            <path d="M8 8V3.500M8 8l4 2M8 8l-4 2.500" stroke="currentColor" strokeWidth="2.200" />
          </Glyph>
        </span>
      </div>
      <div className="ml-auto flex items-center pr-[15px]">
        <ChevronUp size={11} />
        <Volume2 size={13} strokeWidth={1.700} className="ml-[4px]" />
        <span className="ml-[5.500px]">05:51</span>
        <Glyph size={13} className="ml-[10px]">
          <path d="M1 1h14v11h-5l-2 3.500V12H1z" />
          <path d="M4 4h8M4 6.500h8M4 9h5" stroke="#2c3034" strokeWidth="1" />
        </Glyph>
      </div>
    </div>
  );
}

// Always-on-top chat lines drawn above the taskbar
function ChatOverlay() {
  return (
    <div className="absolute left-0 top-[685px] w-[302px] font-[Roboto,sans-serif] text-[9.650px] font-bold leading-none text-white">
      <div className="flex h-[17px] items-center bg-[#0b0b0b]/90 pl-[2px]">
        <div className="flex items-center gap-px [&>span>svg]:h-[9px] [&>span>svg]:w-[9px]">
          <span><BadgeIcon kind="mod" /></span>
          <span><BadgeIcon kind="knife" /></span>
          <span><BadgeIcon kind="og" /></span>
        </div>
        <span className="ml-[3.500px] whitespace-pre"><span className="text-[#8b42e8]">Kinowaaa</span> : iyiyim kardeşim sen nasılsın</span>
      </div>
      <div className="flex h-[18px] items-center bg-[#0b1214]/60 pl-[2px]">
        <div className="flex items-center [&>span>svg]:h-[9px] [&>span>svg]:w-[9px]">
          <span><BadgeIcon kind="mod" /></span>
          <span><BadgeIcon kind="blade" /></span>
        </div>
        <span className="ml-[5px] whitespace-pre"><span className="text-[#e2557f]">Ibusra</span> : sen modluğunu aldın mı yine</span>
      </div>
    </div>
  );
}

export default function App() {
  return (
    <div className="relative flex h-[720px] w-[1280px] flex-col overflow-hidden bg-[#333]">
      <TabBar />
      <Toolbar />
      <div className="h-[644.500px] flex-none pl-[3px] pr-[3px]">
        <Dashboard />
      </div>
      <Taskbar />
      <div className="absolute left-[1232px] top-[652px] grid h-[32px] w-[32px] place-items-center rounded-full bg-[#19fb12] text-[#06330a]">
        <Glyph size={17}>
          <path d="M2.500 8V6.500a5.500 5.500 0 0111 0v5.500L11 14.500H8" fill="none" stroke="currentColor" strokeWidth="1.600" />
          <path d="M.5 7h3v4.500h-3zM12.500 7h3v4.500h-3zM6 13.500h4V16H6z" />
        </Glyph>
      </div>
      <ChatOverlay />
    </div>
  );
}
